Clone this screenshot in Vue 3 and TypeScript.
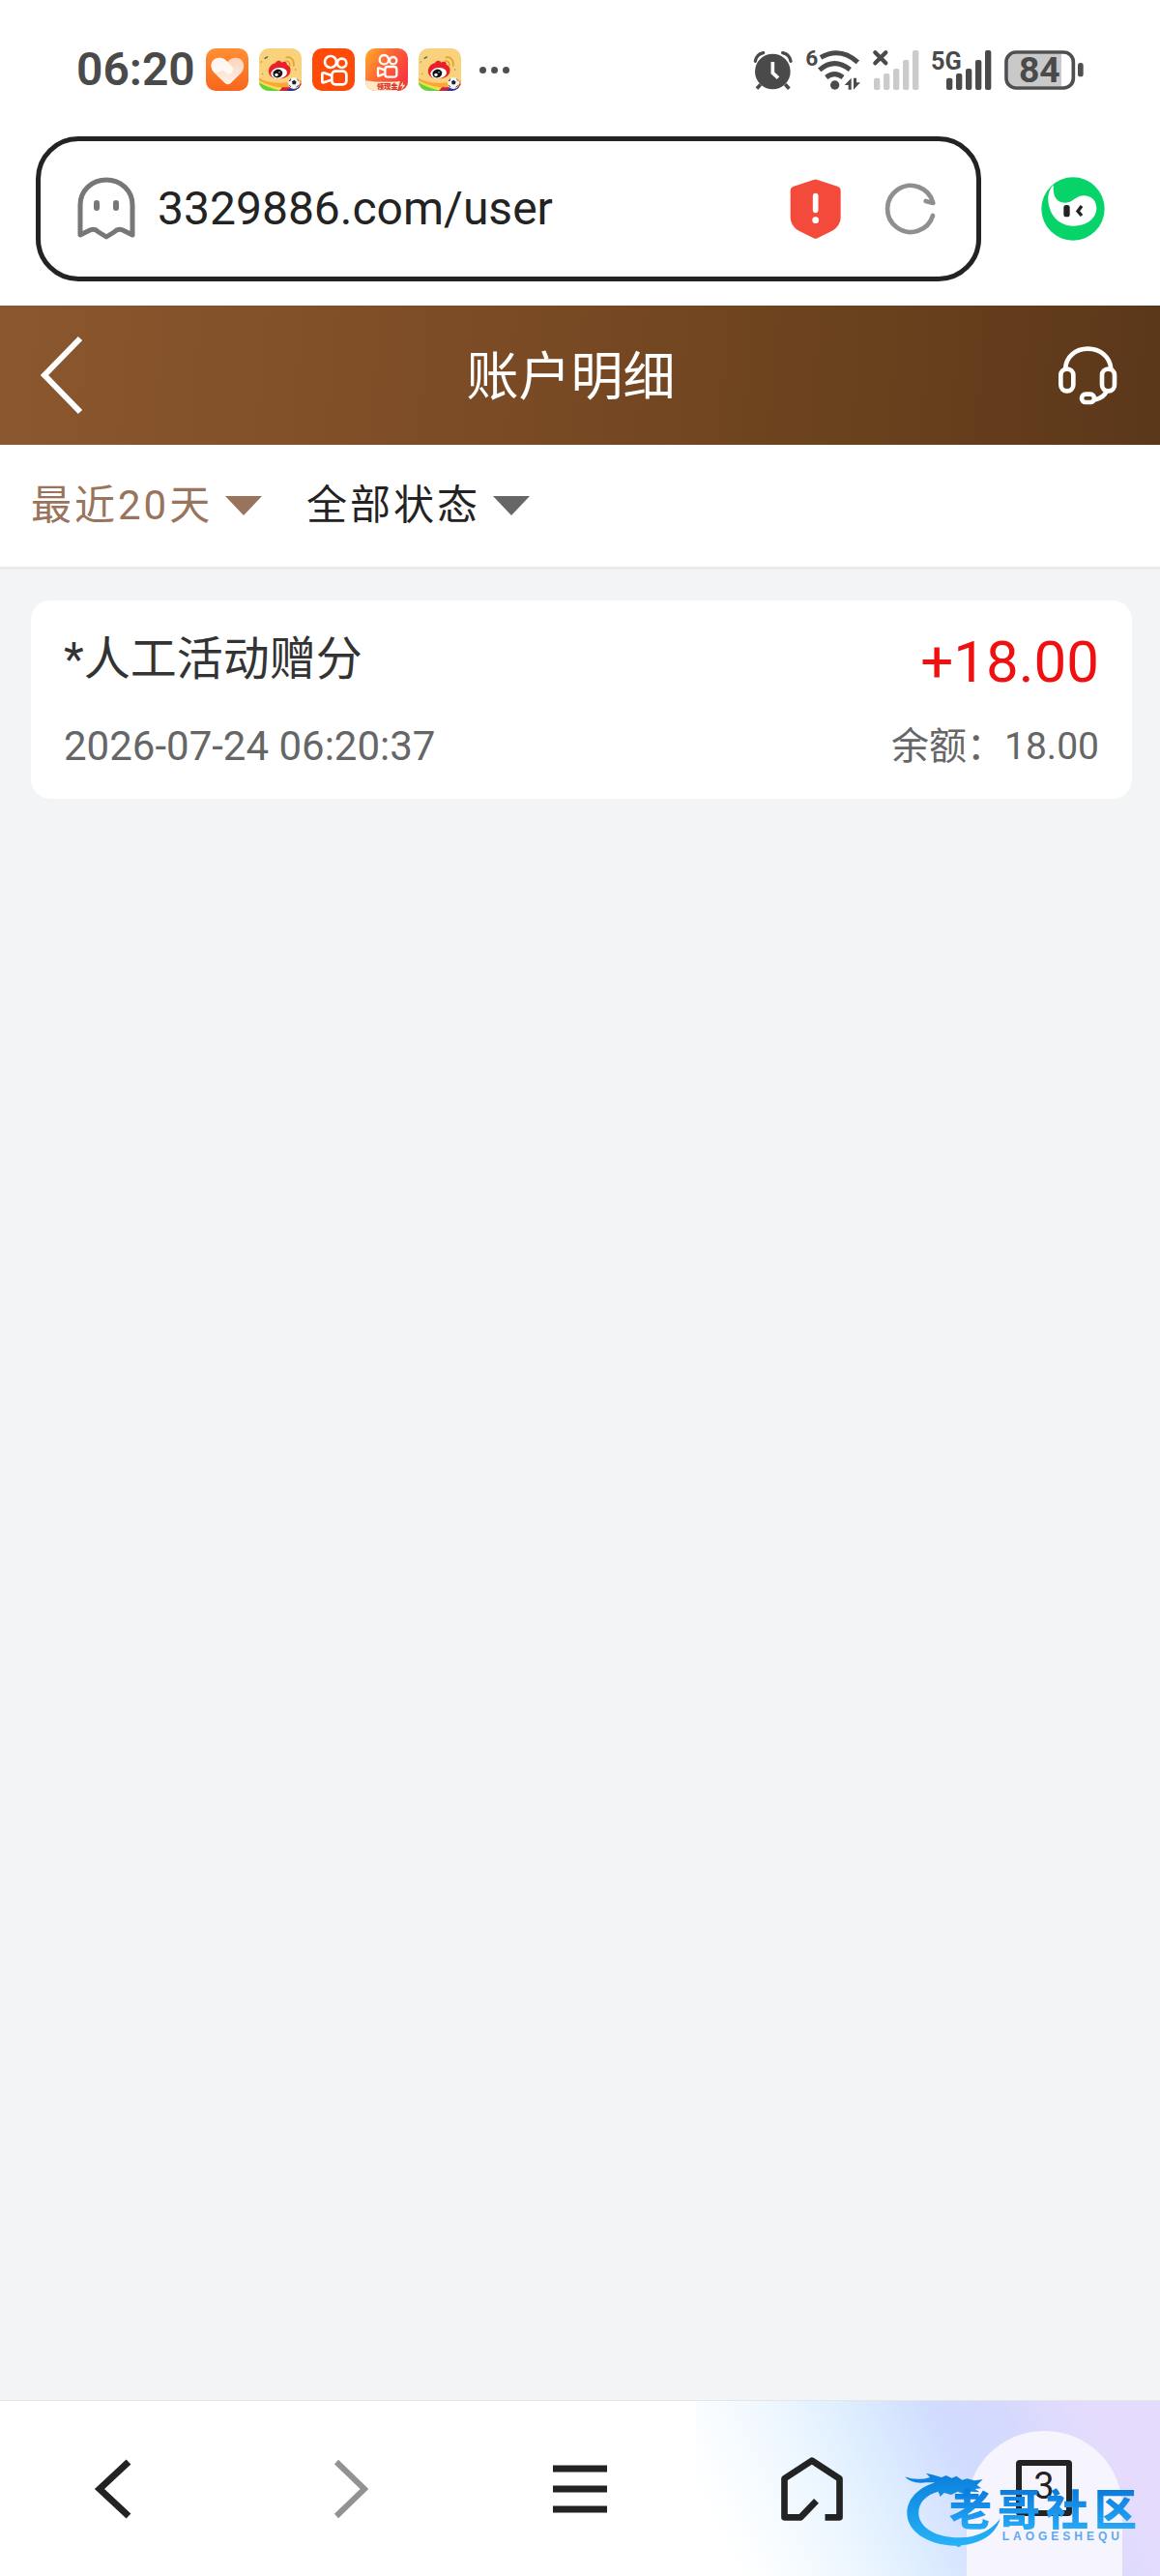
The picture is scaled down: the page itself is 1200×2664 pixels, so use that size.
<script setup lang="ts">
import { ref } from 'vue'

interface Entry {
  title: string
  amount: string
  time: string
  balance: string
}

const address = ref('3329886.com/user')
const range = ref('最近20天')
const state = ref('全部状态')
const tabCount = 3

const entries: Entry[] = [
  { title: '*人工活动赠分', amount: '+18.00', time: '2026-07-24 06:20:37', balance: '余额：18.00' },
]
</script>

<template>
  <div class="page">
    <div class="status">
      <div class="status-left">
        <span class="clock">06:20</span>
        <svg class="app" viewBox="462 60 132 132" aria-hidden="true">
          <defs>
            <linearGradient id="heartBg" x1="0" y1="0" x2="0" y2="1">
              <stop offset="0" stop-color="#ff8f35" /><stop offset="1" stop-color="#f9651a" />
            </linearGradient>
            <linearGradient id="heartFg" x1="0" y1="0" x2="0" y2="1">
              <stop offset="0" stop-color="#fcd3b8" /><stop offset="1" stop-color="#fff3ea" />
            </linearGradient>
          </defs>
          <rect x="462" y="60" width="132" height="132" rx="30" fill="url(#heartBg)" />
          <path d="M529 102C542 86 564 86 574 98C584 111 580 127 569 139L539 168Q530 176 521 168L490 138C476 123 475 106 486 96C499 85 518 89 529 102Z" fill="url(#heartFg)" />
          <path d="M490 138C476 123 475 106 486 96C499 85 518 89 529 102L544 118C552 130 538 145 526 137L515 128Z" fill="#fff" opacity=".75" />
        </svg>
        <svg class="app" viewBox="627 60 132 132" aria-hidden="true">
          <defs>
            <clipPath id="tile"><rect x="627" y="60" width="132" height="132" rx="30" /></clipPath>
            <g id="weibo">
              <g clip-path="url(#tile)">
                <rect x="627" y="60" width="132" height="132" fill="#fad27b" />
                <path d="M627 152Q670 178 759 160V192H627Z" fill="#f9a63a" />
                <path d="M627 160Q670 184 720 182V192H627Z" fill="#f4e04a" />
                <path d="M627 166Q655 184 700 192H627Z" fill="#5fd33f" />
                <path d="M700 180Q735 184 759 168V192H690Z" fill="#c9253c" />
                <path d="M712 192Q740 172 759 182V192Z" fill="#243a9c" />
                <path d="M644 92L654 86" stroke="#3e6c62" stroke-width="4" />
                <circle cx="634" cy="102" r="2" fill="#7a8a4a" /><circle cx="740" cy="126" r="2" fill="#7a8a4a" /><circle cx="638" cy="139" r="2" fill="#7a8a4a" />
              </g>
              <path d="M712 88C726 85 738 98 734 114M710 99C719 98 724 105 722 113" fill="none" stroke="#e5a22d" stroke-width="5" stroke-linecap="round" />
              <path d="M657 134C655 119 667 107 678 106C680 98 692 95 697 104C706 98 716 103 713 111C722 113 727 123 724 134C720 148 704 154 690 154C672 154 658 147 657 134Z" fill="#e8202a" />
              <ellipse cx="689" cy="137" rx="25" ry="17" fill="#fff" transform="rotate(-8 689 137)" />
              <ellipse cx="685" cy="138" rx="15" ry="13" fill="#111" transform="rotate(-20 685 138)" />
              <circle cx="681" cy="142" r="5" fill="#fff" /><circle cx="690" cy="134" r="2" fill="#fff" />
              <circle cx="735" cy="168" r="18" fill="#f5f5f5" />
              <path d="M729 163L736 158L743 164L740 172L731 172ZM719 161L727 152L724 162ZM744 152L752 162L747 160ZM718 172L725 177L727 184ZM752 172L744 178L742 184Z" fill="#222" />
            </g>
          </defs>
          <use href="#weibo" />
        </svg>
        <svg class="app" viewBox="42 60 132 132" aria-hidden="true">
          <rect x="42" y="60" width="132" height="132" rx="30" fill="#ff4a08" />
          <g fill="none" stroke="#fff" stroke-width="8" stroke-linejoin="round">
            <circle cx="99" cy="102" r="18" /><circle cx="134" cy="106" r="14" />
            <rect x="103" y="131" width="45" height="41" rx="11" />
            <path d="M101 144L78 136Q73 135 73 140V163Q73 168 78 166L101 158" />
          </g>
        </svg>
        <svg class="app" viewBox="207 60 132 132" aria-hidden="true">
          <defs>
            <linearGradient id="cashBg" x1="0" y1="0" x2="1" y2=".6">
              <stop offset="0" stop-color="#ffae26" /><stop offset=".5" stop-color="#fd6636" /><stop offset="1" stop-color="#f9373f" />
            </linearGradient>
            <clipPath id="cashTile"><rect x="207" y="60" width="132" height="132" rx="30" /></clipPath>
          </defs>
          <g clip-path="url(#cashTile)">
            <rect x="207" y="60" width="132" height="132" fill="url(#cashBg)" />
            <path d="M207 160Q270 170 339 158V192H207Z" fill="#ffe9c8" />
            <path d="M316 158H339V192H306Z" fill="#ef3b3b" />
            <path d="M325 162L314 178H322L318 190L331 173H323Z" fill="#ffe7a0" />
          </g>
          <g fill="none" stroke="#fff" stroke-width="7" stroke-linejoin="round">
            <circle cx="265" cy="95" r="14" /><circle cx="293" cy="98" r="11" />
            <rect x="268" y="117" width="36" height="32" rx="8" />
            <path d="M266 127L250 121Q246 120 246 124V143Q246 147 250 145L266 139" />
          </g>
          <text x="242" y="186" class="cash">领现金</text>
        </svg>
        <svg class="app" viewBox="627 60 132 132" aria-hidden="true"><use href="#weibo" /></svg>
        <svg class="more" viewBox="0 0 31 7" aria-hidden="true" fill="#4f4f4f">
          <circle cx="3.5" cy="3.5" r="3.5" /><circle cx="15.5" cy="3.5" r="3.5" /><circle cx="27.5" cy="3.5" r="3.5" />
        </svg>
      </div>
      <div class="status-right">
        <svg width="42" height="44" viewBox="60 60 126 132" aria-hidden="true">
          <circle cx="121" cy="132" r="55" fill="#4a4a4a" />
          <path d="M83 172L72 185M160 172L172 185" stroke="#4a4a4a" stroke-width="11" />
          <path d="M67 100Q70 79 92 74M177 100Q174 79 152 74" fill="none" stroke="#4a4a4a" stroke-width="10" stroke-linecap="round" />
          <path d="M121 102V136L138 152" fill="none" stroke="#fff" stroke-width="11" />
        </svg>
        <svg width="58" height="44" viewBox="219 60 174 132" aria-hidden="true">
          <text x="220" y="113" class="glyph six">6</text>
          <g fill="none" stroke="#4a4a4a" stroke-width="15">
            <path d="M267 88Q328 54 382 103" /><path d="M263 127Q309 87 358 126" /><path d="M284 150Q310 130 336 150" />
          </g>
          <circle cx="311" cy="174" r="14" fill="#4a4a4a" />
          <path d="M362 152V188H353V174H341ZM369 188V152H378V166H390Z" fill="#4a4a4a" />
        </svg>
        <svg width="49" height="44" viewBox="429 60 147 132" aria-hidden="true">
          <path d="M436 73L469 106M469 73L436 106" stroke="#4a4a4a" stroke-width="13" stroke-linecap="round" />
          <g fill="#cbcbcb">
            <rect x="432" y="152" width="19" height="37" rx="6" /><rect x="462" y="138" width="19" height="51" rx="6" /><rect x="492" y="123" width="19" height="66" rx="6" /><rect x="522" y="96" width="19" height="93" rx="6" /><rect x="552" y="66" width="19" height="123" rx="6" />
          </g>
        </svg>
        <svg width="63" height="44" viewBox="609 60 189 132" aria-hidden="true">
          <text x="606" y="126" class="glyph five">5G</text>
          <g fill="#4a4a4a">
            <rect x="654" y="152" width="19" height="37" rx="6" /><rect x="684" y="138" width="19" height="51" rx="6" /><rect x="714" y="123" width="19" height="66" rx="6" /><rect x="744" y="96" width="19" height="93" rx="6" /><rect x="774" y="66" width="19" height="123" rx="6" />
          </g>
        </svg>
        <svg width="83" height="44" viewBox="843 60 249 132" aria-label="84%">
          <path d="M882 77H1020V177H882Q855 177 855 150V104Q855 77 882 77Z" fill="#c9c9c9" />
          <rect x="849" y="72" width="208" height="111" rx="30" fill="none" stroke="#4f4f4f" stroke-width="11" />
          <rect x="1071" y="105" width="17" height="43" rx="8" fill="#4f4f4f" />
          <text x="952" y="166" text-anchor="middle" class="glyph power">84</text>
        </svg>
      </div>
    </div>

    <form class="browser" @submit.prevent>
      <div class="address">
        <svg width="60" height="66" viewBox="0 0 60 66" aria-hidden="true">
          <path d="M3 60V29C3 14 15 3 30 3S57 14 57 29V60L47 55Q42 53 38 57L30 62L22 57Q18 53 13 55Z" fill="none" stroke="#777" stroke-width="5" stroke-linejoin="round" />
          <rect x="17" y="24" width="6" height="11" rx="3" fill="#777" /><rect x="37" y="24" width="6" height="11" rx="3" fill="#777" />
        </svg>
        <input v-model="address" class="url" type="text" aria-label="网址" />
        <button type="button" class="plain" aria-label="安全警告">
          <svg width="53" height="62" viewBox="163 165 159 186">
            <path d="M237 168Q243 165 249 168L313 189Q321 192 321 200V282C321 302 311 317 293 327L249 349Q243 352 237 349L193 327C175 317 165 302 165 282V200Q165 192 173 189Z" fill="#f44a3b" />
            <path d="M243 218V262" stroke="#fff" stroke-width="17" stroke-linecap="round" /><circle cx="243" cy="293" r="10" fill="#fff" />
          </svg>
        </button>
        <button type="button" class="plain" aria-label="刷新">
          <svg width="53" height="54" viewBox="457 178 159 162">
            <path d="M607 280A72 72 0 1 1 608 241L585 235" fill="none" stroke="#8f8f8f" stroke-width="14" stroke-linecap="round" stroke-linejoin="round" />
          </svg>
        </button>
      </div>
      <button type="button" class="plain" aria-label="助手">
        <svg width="66" height="66" viewBox="945 153 198 198">
          <circle cx="1044" cy="252" r="98" fill="#06d468" />
          <path d="M983 178C966 196 963 222 971 248C981 283 1010 305 1046 305C1088 305 1117 281 1117 249C1117 226 1100 211 1078 211C1059 211 1050 222 1038 229C1018 238 995 231 987 212C983 201 983 190 983 178Z" fill="#fff" />
          <rect x="1015" y="240" width="19" height="37" rx="8" fill="#222" />
          <path d="M1071 243L1059 259L1071 273" fill="none" stroke="#222" stroke-width="10" />
        </svg>
      </button>
    </form>

    <header class="title-bar">
      <button class="plain back" aria-label="返回">
        <svg width="46" height="80" viewBox="0 0 46 80"><path d="M43 2L6 40L43 78" fill="none" stroke="#fff" stroke-width="6" /></svg>
      </button>
      <h1>账户明细</h1>
      <button class="plain" aria-label="客服">
        <svg width="60" height="60" viewBox="585 143 180 180">
          <g fill="none" stroke="#fff" stroke-width="14">
            <path d="M606 213C609 175 638 151 676 151S744 175 748 213" />
            <rect x="592" y="214" width="39" height="68" rx="19" /><rect x="720" y="214" width="39" height="68" rx="19" />
            <rect x="657" y="292" width="39" height="25" rx="12" /><path d="M735 282Q725 304 698 309" />
          </g>
        </svg>
      </button>
    </header>

    <div class="filters">
      <label class="filter active">
        <select v-model="range" aria-label="时间范围"><option>最近20天</option></select>
        <svg width="38" height="20" viewBox="0 0 38 20" aria-hidden="true"><path d="M0 0H38L19 20Z" /></svg>
      </label>
      <label class="filter">
        <select v-model="state" aria-label="状态"><option>全部状态</option></select>
        <svg width="38" height="20" viewBox="0 0 38 20" aria-hidden="true"><path d="M0 0H38L19 20Z" /></svg>
      </label>
    </div>

    <main>
      <article v-for="entry in entries" :key="entry.time" class="entry">
        <div class="line">
          <h2>{{ entry.title }}</h2>
          <strong>{{ entry.amount }}</strong>
        </div>
        <div class="line">
          <time>{{ entry.time }}</time>
          <span class="balance">{{ entry.balance }}</span>
        </div>
      </article>
    </main>

    <nav class="toolbar">
      <button class="plain" aria-label="后退">
        <svg width="60" height="66" viewBox="0 0 60 66"><path d="M43 5L13 33L43 61" fill="none" stroke="#232323" stroke-width="7" /></svg>
      </button>
      <button class="plain" aria-label="前进">
        <svg width="60" height="66" viewBox="0 0 60 66"><path d="M18 5L47 33L18 61" fill="none" stroke="#929292" stroke-width="6" /></svg>
      </button>
      <button class="plain" aria-label="菜单">
        <svg width="56" height="66" viewBox="0 0 56 66"><path d="M0 12H56M0 33H56M0 54H56" stroke="#232323" stroke-width="7" /></svg>
      </button>
      <button class="plain" aria-label="主页">
        <svg width="64" height="66" viewBox="325 237 191 198"><path d="M461 424H506V304L420 248L335 304V424H385L434 373" fill="none" stroke="#232323" stroke-width="20" stroke-linejoin="round" /></svg>
      </button>
      <button class="plain tabs" aria-label="标签页"><span>{{ tabCount }}</span></button>
      <div class="watermark">
        <svg width="104" height="80" viewBox="62 106 312 240" aria-hidden="true">
          <defs>
            <linearGradient id="ring" x1="0" y1="0" x2="0" y2="1">
              <stop offset="0" stop-color="#0a7fdc" /><stop offset="1" stop-color="#27b4f8" />
            </linearGradient>
          </defs>
          <path d="M162 140C105 158 75 195 75 235C75 290 135 334 226 336L236 341L244 335C300 330 350 303 364 252C332 293 284 312 235 311C166 311 114 281 111 238C109 205 130 180 172 168L178 184L190 172L212 178L232 168L252 176L274 168L300 170L286 160L306 158L292 148L310 130L284 134L262 128L246 132L228 120L214 126L196 118L182 124L154 116L134 111L146 124Q108 136 68 122Q90 146 134 140Z" fill="url(#ring)" />
        </svg>
        <div class="brand">
          <span class="brand-name">老哥社区</span>
          <span class="brand-latin">LAOGESHEQU</span>
        </div>
      </div>
    </nav>
  </div>
</template>

<style>
body {
  margin: 0;
}
</style>

<style scoped>
.page {
  display: flex;
  flex-direction: column;
  min-height: 100vh;
  background: #f3f4f6;
  font-family: Roboto, "Noto Sans CJK SC", sans-serif;
  color: #232323;
}
svg {
  display: block;
  flex: none;
  overflow: visible;
}
.plain {
  display: flex;
  align-items: center;
  justify-content: center;
  padding: 0;
  border: 0;
  background: none;
  font: inherit;
  color: inherit;
}
.status {
  display: flex;
  align-items: center;
  justify-content: space-between;
  padding: 44px 78px 41px 79px;
  background: #fff;
}
.status-left,
.status-right {
  display: flex;
  align-items: center;
  gap: 11px;
  height: 56px;
}
.status-right {
  gap: 12px;
}
.clock {
  font-size: 48px;
  line-height: 56px;
  font-weight: 600;
  color: #4a4a4a;
}
.app {
  width: 44px;
  height: 44px;
}
.more {
  width: 31px;
  height: 7px;
  margin-left: 8px;
}
.cash {
  font-size: 22px;
  font-weight: 900;
  fill: #d8322a;
}
.glyph {
  fill: #4a4a4a;
  font-weight: 700;
}
.six {
  font-size: 68px;
}
.five {
  font-size: 76px;
}
.power {
  font-size: 112px;
}
.browser {
  display: flex;
  align-items: center;
  gap: 62px;
  padding: 0 59px 25px 37px;
  background: #fff;
}
.address {
  display: flex;
  flex: 1;
  align-items: center;
  gap: 45px;
  height: 150px;
  padding: 0 42px 0 38px;
  border: 5px solid #232323;
  border-radius: 44px;
  box-sizing: border-box;
}
.url {
  flex: 1;
  min-width: 0;
  margin-left: -22px;
  padding: 0;
  border: 0;
  outline: 0;
  background: none;
  font: 48px/60px Roboto, sans-serif;
  color: #232323;
}
.title-bar {
  display: flex;
  align-items: center;
  height: 144px;
  padding: 0 45px 0 40px;
  background: linear-gradient(95deg, #8b572e, #7c4c26 40%, #69411d 75%, #5b371a);
  color: #fff;
}
h1 {
  flex: 1;
  margin: 0;
  padding-top: 6px;
  font-size: 54px;
  line-height: 72px;
  font-weight: 400;
  text-align: center;
}
.filters {
  display: flex;
  gap: 46px;
  height: 126px;
  padding: 0 32px;
  border-bottom: 3px solid #e9eaec;
  background: #fff;
}
.filter {
  display: flex;
  align-items: center;
  gap: 12px;
  color: #232323;
  fill: #666;
}
.active {
  color: #99745c;
  fill: #99745c;
}
select {
  appearance: none;
  padding: 0;
  border: 0;
  background: none;
  font: 42px/60px Roboto, "Noto Sans CJK SC", sans-serif;
  letter-spacing: 3px;
  color: inherit;
}
main {
  flex: 1;
  padding: 32px 29px 32px 32px;
}
.entry {
  display: flex;
  flex-direction: column;
  gap: 17px;
  padding: 24px 34px;
  border-radius: 20px;
  background: #fff;
}
.line {
  display: flex;
  align-items: center;
  justify-content: space-between;
}
h2 {
  margin: 0;
  padding-bottom: 6px;
  font-size: 48px;
  line-height: 72px;
  font-weight: 400;
  color: #333;
}
strong {
  font-size: 60px;
  line-height: 80px;
  font-weight: 400;
  color: #f01010;
}
time {
  font-size: 42px;
  line-height: 60px;
  color: #666;
}
.balance {
  font-size: 39px;
  line-height: 60px;
  color: #666;
}
.toolbar {
  position: relative;
  display: grid;
  grid-template-columns: repeat(5, 1fr);
  height: 181px;
  border-top: 1px solid #e4e6e8;
  background: linear-gradient(64deg, #fff 8%, #eff8ff 28%, #dcecff 44%, #d1dcff 58%, #d5d9fe 70%, #e5dcfd 86%) right / 40% 100% no-repeat #fff;
}
.tabs {
  justify-self: center;
  align-self: end;
  width: 161px;
  height: 150px;
  padding-bottom: 32px;
  border-radius: 80px 80px 0 0;
  box-sizing: border-box;
  background: #f6f5fe;
}
.tabs span {
  width: 46px;
  height: 46px;
  border: 6px solid #232323;
  border-radius: 4px;
  font-size: 38px;
  line-height: 42px;
}
.watermark {
  position: absolute;
  right: 18px;
  bottom: 28px;
  display: flex;
  pointer-events: none;
}
.brand {
  display: flex;
  flex-direction: column;
  align-items: flex-end;
  margin: 16px 0 0 -56px;
}
.brand-name {
  padding-bottom: 2px;
  font-family: "Noto Sans CJK SC", sans-serif;
  font-size: 44px;
  line-height: 42px;
  font-weight: 900;
  letter-spacing: 6px;
  color: transparent;
  background: linear-gradient(#0878dc, #27aaf6);
  background-clip: text;
}
.brand-latin {
  margin-right: 20px;
  font: 700 12px/14px "Liberation Sans", sans-serif;
  letter-spacing: 4px;
  color: #5fa8ee;
}
</style>
